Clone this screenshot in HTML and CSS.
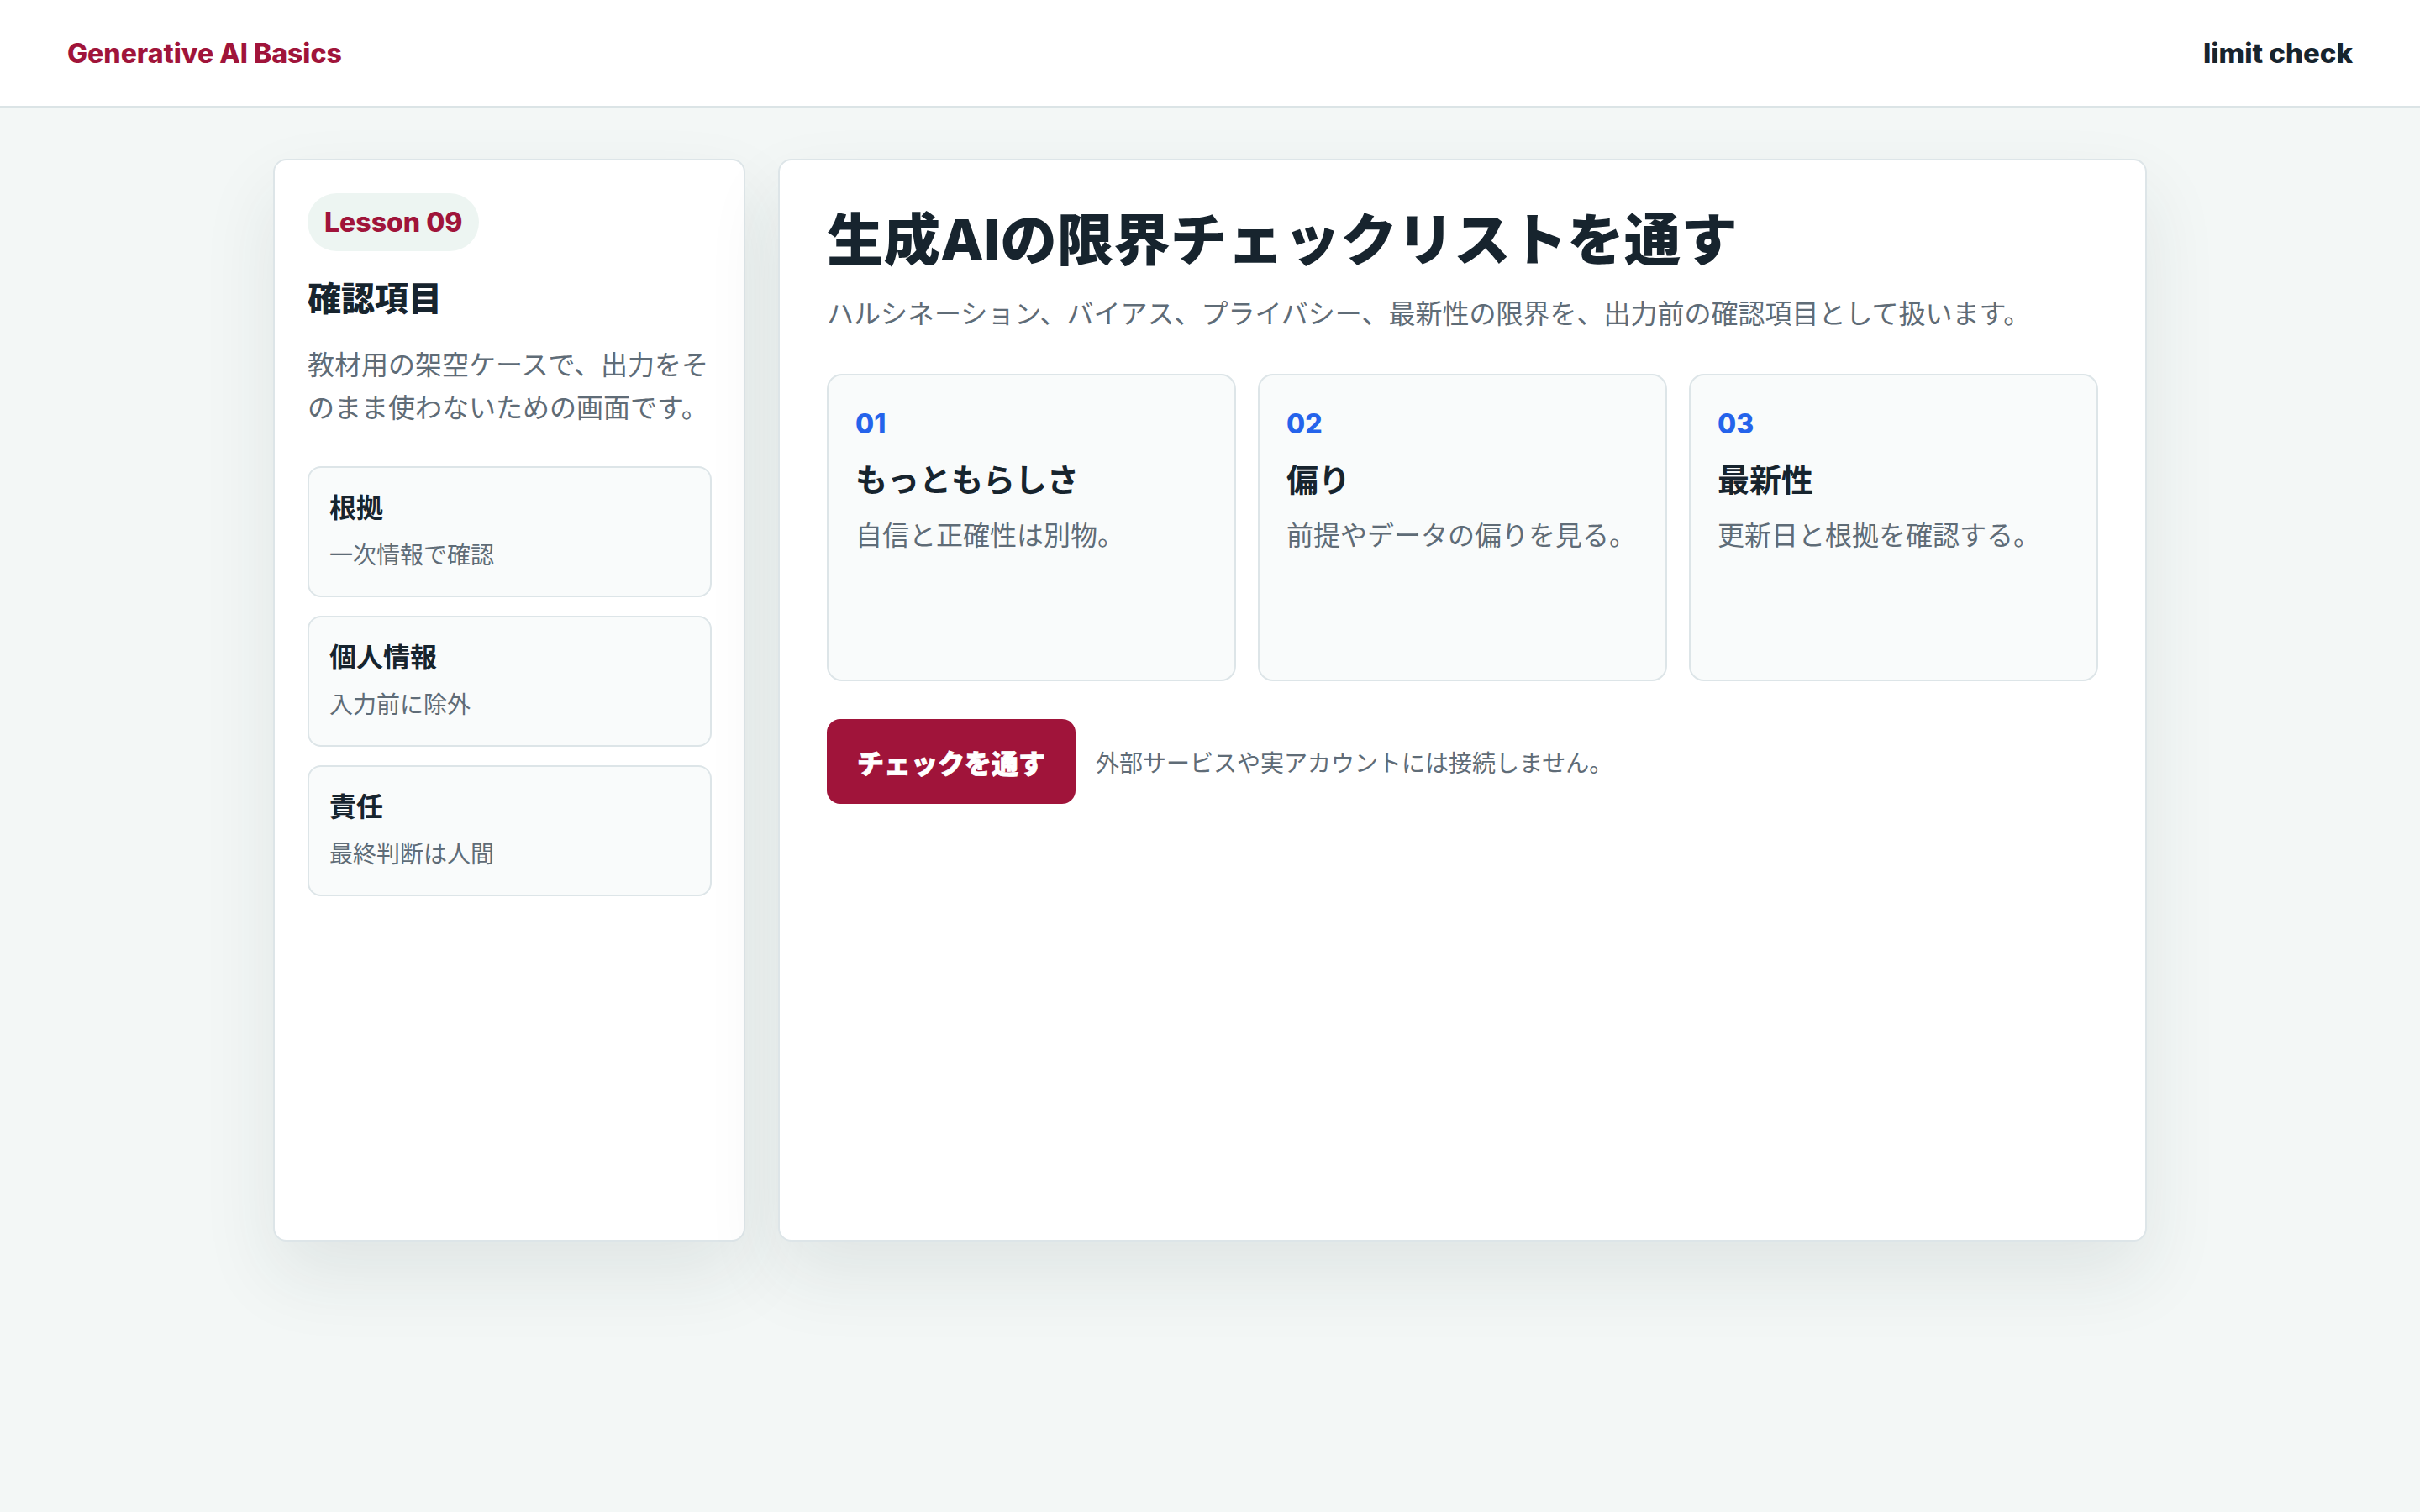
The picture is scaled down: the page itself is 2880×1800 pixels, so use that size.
FILE: index.html
```html
<!DOCTYPE html>
<html lang="ja">
<head>
    <meta charset="UTF-8">
    <meta name="viewport" content="width=device-width, initial-scale=1.0">
    <title>Generative AI Basics - limit check</title>
    <link rel="stylesheet" href="styles.css">
</head>
<body>
    <!-- Top bar -->
    <header class="topbar">
        <span class="brand">Generative AI Basics</span>
        <span class="topbar-title">limit check</span>
    </header>

    <main class="layout">
        <!-- Side panel with the check items -->
        <aside class="panel side">
            <span class="lesson-tag">Lesson 09</span>
            <h2>確認項目</h2>
            <p class="side-text">教材用の架空ケースで、出力をそのまま使わないための画面です。</p>
            <div class="check-list">
                <div class="check-item">
                    <strong>根拠</strong>
                    <span>一次情報で確認</span>
                </div>
                <div class="check-item">
                    <strong>個人情報</strong>
                    <span>入力前に除外</span>
                </div>
                <div class="check-item">
                    <strong>責任</strong>
                    <span>最終判断は人間</span>
                </div>
            </div>
        </aside>

        <!-- Main panel -->
        <section class="panel main">
            <h1>生成AIの限界チェックリストを通す</h1>
            <p class="lead">ハルシネーション、バイアス、プライバシー、最新性の限界を、出力前の確認項目として扱います。</p>

            <div class="limit-grid">
                <div class="limit-card">
                    <span class="limit-no">01</span>
                    <h3>もっともらしさ</h3>
                    <p>自信と正確性は別物。</p>
                </div>
                <div class="limit-card">
                    <span class="limit-no">02</span>
                    <h3>偏り</h3>
                    <p>前提やデータの偏りを見る。</p>
                </div>
                <div class="limit-card">
                    <span class="limit-no">03</span>
                    <h3>最新性</h3>
                    <p>更新日と根拠を確認する。</p>
                </div>
            </div>

            <div class="actions">
                <button type="button" id="runCheck">チェックを通す</button>
                <span class="note">外部サービスや実アカウントには接続しません。</span>
            </div>
        </section>
    </main>
</body>
</html>
```

FILE: styles.css
```css
* {
    box-sizing: border-box;
}

body {
    margin: 0;
    min-height: 100vh;
    font-family: Inter, "Noto Sans CJK JP", sans-serif;
    background-color: #f3f7f6;
    color: #17242e;
}

h1, h2, h3, p {
    margin: 0;
}

/* Top bar */
.topbar {
    height: 128px;
    padding: 0 80px;
    display: flex;
    justify-content: space-between;
    align-items: center;
    background-color: #fff;
    border-bottom: 2px solid #dbe4e6;
}

.brand {
    font-size: 32px;
    font-weight: 800;
    color: #a0143a;
}

.topbar-title {
    font-size: 33px;
    font-weight: 800;
    color: #17242e;
}

/* Two column layout */
.layout {
    max-width: 2230px;
    margin: 0 auto;
    padding: 61px 0 120px;
    display: grid;
    grid-template-columns: 562px 1fr;
    gap: 39px;
}

.panel {
    min-height: 1289px;
    background-color: #fff;
    border: 2px solid #dde5e8;
    border-radius: 16px;
    box-shadow: 0 40px 90px rgba(30, 50, 55, 0.09);
}

/* Side panel */
.side {
    padding: 39px 38px 39px 39px;
}

.lesson-tag {
    display: inline-block;
    padding: 9px 20px;
    line-height: 51px;
    border-radius: 999px;
    background-color: #edf5f2;
    color: #a0143a;
    font-size: 32px;
    font-weight: 800;
}

.side h2 {
    margin-top: 31px;
    font-size: 40px;
    line-height: 52px;
    font-weight: 800;
}

.side-text {
    margin-top: 27px;
    font-size: 32px;
    line-height: 51px;
    color: #5f6c77;
}

.check-list {
    margin-top: 44px;
    display: flex;
    flex-direction: column;
    gap: 22px;
}

.check-item {
    display: flex;
    flex-direction: column;
    padding: 24px 24px 26px;
    border: 2px solid #dde5e8;
    border-radius: 16px;
    background-color: #f9fbfb;
}

.check-item strong {
    font-size: 32px;
    line-height: 48px;
    font-weight: 700;
}

.check-item span {
    margin-top: 10px;
    font-size: 28px;
    line-height: 44px;
    color: #5f6c77;
}

/* Main panel */
.main {
    padding: 56px;
}

.main h1 {
    font-size: 67.5px;
    line-height: 78px;
    font-weight: 800;
}

.lead {
    margin-top: 23px;
    font-size: 32px;
    line-height: 51px;
    color: #5f6c77;
}

.limit-grid {
    margin-top: 46px;
    display: grid;
    grid-template-columns: repeat(3, 1fr);
    gap: 26px;
}

.limit-card {
    min-height: 366px;
    padding: 32px;
    border: 2px solid #dde5e8;
    border-radius: 18px;
    background-color: #f9fbfb;
}

.limit-no {
    display: block;
    font-size: 32px;
    line-height: 51px;
    font-weight: 800;
    color: #2563eb;
}

.limit-card h3 {
    margin-top: 12px;
    font-size: 38px;
    line-height: 58px;
    font-weight: 700;
}

.limit-card p {
    margin-top: 12px;
    font-size: 32px;
    line-height: 51px;
    color: #5f6c77;
}

.actions {
    margin-top: 45px;
    display: flex;
    align-items: center;
    gap: 24px;
}

button {
    height: 101px;
    padding: 0 36px;
    border: none;
    border-radius: 16px;
    background-color: #a0143a;
    color: #fff;
    font-family: inherit;
    font-size: 32px;
    font-weight: 800;
    -webkit-text-stroke: 0.8px #fff;
    cursor: pointer;
}

button:hover {
    background-color: #8a1132;
}

.note {
    font-size: 28px;
    color: #5f6c77;
}
```
